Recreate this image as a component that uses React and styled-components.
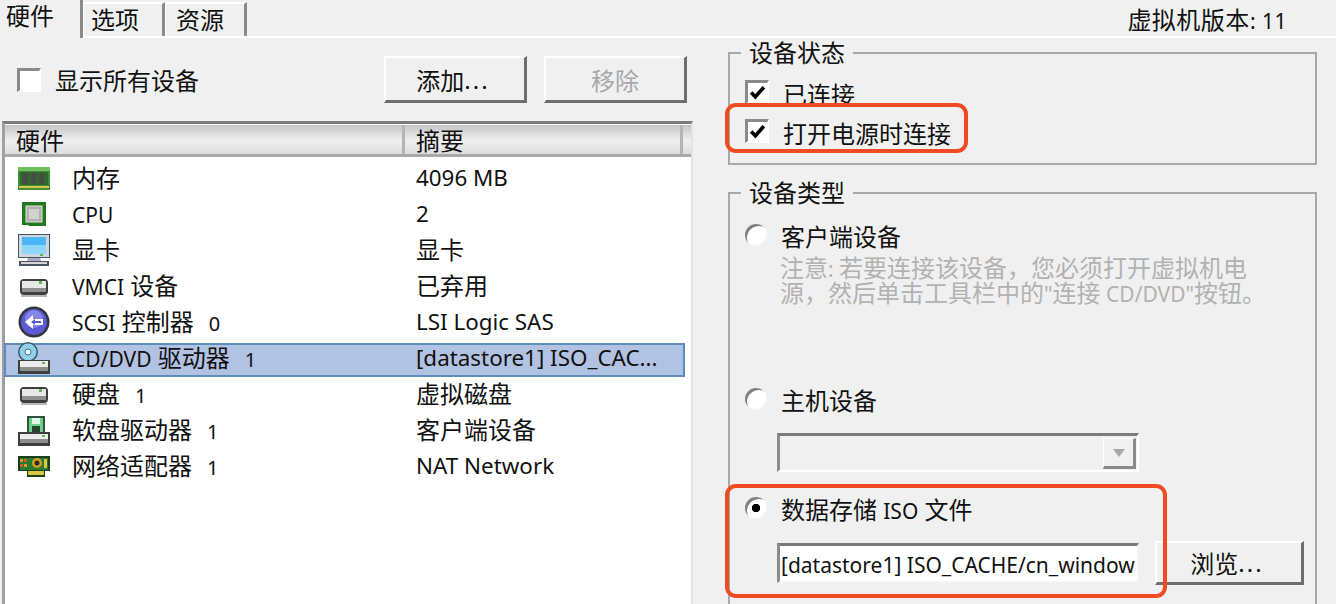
import styled, { createGlobalStyle } from "styled-components"

const GlobalStyle = createGlobalStyle`
    html, body {
        margin: 0;
        padding: 0;
        background: #f0f0f0;
    }
    *, *::before, *::after {
        box-sizing: border-box;
    }
`

const MemoryIcon = () => (
    <svg width="32" height="32" viewBox="0 0 32 32">
        <rect x="0" y="5" width="32" height="23" fill="#3f8f3a" />
        <rect x="0" y="5" width="32" height="4" fill="#6fbf5f" />
        <rect x="2" y="10" width="28" height="13" fill="#2f6a2c" />
        <rect x="5" y="11" width="5" height="11" fill="#4a4a4a" />
        <rect x="13" y="11" width="5" height="11" fill="#4a4a4a" />
        <rect x="21" y="11" width="5" height="11" fill="#4a4a4a" />
        <rect x="1" y="24" width="30" height="2" fill="#d8c84a" />
    </svg>
)

const CpuIcon = () => (
    <svg width="32" height="32" viewBox="0 0 32 32">
        <path d="M4 4h24v24h-17l-1-1h-6z" fill="#1f7a1f" />
        <rect x="8" y="8" width="16" height="16" fill="#b0b0ac" stroke="#e0e0dc" />
        <rect x="11" y="11" width="10" height="10" fill="#d2d2ce" />
    </svg>
)

const MonitorIcon = () => (
    <svg width="32" height="32" viewBox="0 0 32 32">
        <rect x="0" y="0" width="32" height="24" fill="#4a545e" />
        <rect x="1" y="1" width="30" height="22" fill="#cfd6dc" />
        <rect x="4" y="3" width="24" height="17" fill="#49b6f5" />
        <rect x="4" y="11" width="24" height="9" fill="#8ed6fb" />
        <path d="M10 24h12l1 3h-14z" fill="#a9a9c4" />
        <path d="M1 27h30v5h-30z" fill="#4a545e" />
        <rect x="3" y="28" width="26" height="2" fill="#d5d5d5" />
        <rect x="22" y="20" width="3" height="2" fill="#45c24a" />
    </svg>
)

const DiskIcon = () => (
    <svg width="32" height="32" viewBox="0 0 32 32">
        <rect x="2" y="9" width="28" height="16" rx="4" fill="#3e3e3e" />
        <rect x="4" y="11" width="24" height="7" fill="#e8e8e8" />
        <rect x="4" y="18" width="24" height="4" fill="#8f8f8f" />
        <rect x="21" y="11" width="3" height="3" fill="#58c24a" />
        <rect x="3" y="25" width="26" height="2" fill="#b8b8b8" />
    </svg>
)

const ScsiIcon = () => (
    <svg width="32" height="32" viewBox="0 0 32 32">
        <circle cx="16" cy="16" r="15.5" fill="#33333f" />
        <circle cx="16" cy="16" r="13" fill="#5a5ad2" />
        <circle cx="16" cy="13" r="9" fill="#8484e6" />
        <path d="M7 16l8-7v4h10v6h-10v4z" fill="#fff" />
        <path d="M13 16l4-3v2h6v2h-6v2z" fill="#5a5ad2" />
    </svg>
)

const CdDriveIcon = () => (
    <svg width="32" height="32" viewBox="0 0 32 32">
        <circle cx="10" cy="10" r="10" fill="#3f5866" />
        <circle cx="10" cy="10" r="8.5" fill="#8fd0ea" />
        <circle cx="10" cy="10" r="3" fill="#e8f6fb" stroke="#4a6f80" />
        <path d="M0 18h32v14h-32z" fill="#3e3e3e" />
        <rect x="2" y="19" width="28" height="6" fill="#ececec" />
        <rect x="2" y="25" width="28" height="4" fill="#8d8d8d" />
        <rect x="24" y="20" width="3" height="2" fill="#58c24a" />
    </svg>
)

const FloppyDriveIcon = () => (
    <svg width="32" height="32" viewBox="0 0 32 32">
        <rect x="9" y="2" width="18" height="18" fill="#35533a" />
        <rect x="11" y="4" width="14" height="15" fill="#69d28c" />
        <rect x="14" y="4" width="8" height="6" fill="#e2f5e6" />
        <rect x="14" y="12" width="8" height="7" fill="#28402c" />
        <path d="M0 18h32v14h-32z" fill="#3e3e3e" />
        <rect x="2" y="20" width="28" height="5" fill="#ececec" />
        <rect x="2" y="25" width="28" height="4" fill="#8d8d8d" />
        <rect x="24" y="21" width="3" height="2" fill="#58c24a" />
    </svg>
)

const NetworkIcon = () => (
    <svg width="32" height="32" viewBox="0 0 32 32">
        <path d="M0 6h32v15h-5v6h-18v-6h-9z" fill="#1a3f1e" />
        <rect x="2" y="8" width="28" height="12" fill="#2a7a2c" />
        <rect x="2" y="9" width="3" height="3" fill="#d89a2a" />
        <rect x="6" y="9" width="3" height="3" fill="#d8572a" />
        <rect x="2" y="14" width="3" height="3" fill="#d8572a" />
        <rect x="6" y="14" width="3" height="3" fill="#d89a2a" />
        <circle cx="19" cy="13" r="5" fill="#d8a020" />
        <circle cx="19" cy="13" r="2.5" fill="#2b2b2b" />
        <rect x="26" y="9" width="3" height="9" fill="#e0c04a" />
        <rect x="10" y="21" width="16" height="4" fill="#d9c53e" />
    </svg>
)

const devices = [
    { icon: <MemoryIcon />, name: "内存", summary: "4096 MB" },
    { icon: <CpuIcon />, latin: "CPU", summary: "2" },
    { icon: <MonitorIcon />, name: "显卡", summary: "显卡", cjk: true },
    { icon: <DiskIcon />, latin: "VMCI", name: " 设备", summary: "已弃用", cjk: true },
    { icon: <ScsiIcon />, latin: "SCSI", name: " 控制器", count: "0", summary: "LSI Logic SAS" },
    { icon: <CdDriveIcon />, latin: "CD/DVD", name: " 驱动器", count: "1", summary: "[datastore1] ISO_CAC...", selected: true },
    { icon: <DiskIcon />, name: "硬盘", count: "1", summary: "虚拟磁盘", cjk: true },
    { icon: <FloppyDriveIcon />, name: "软盘驱动器", count: "1", summary: "客户端设备", cjk: true },
    { icon: <NetworkIcon />, name: "网络适配器", count: "1", summary: "NAT Network" },
]

const Check = () => (
    <svg width="17" height="17" viewBox="0 0 16 16">
        <path d="M2 8l4 4 8-9" fill="none" stroke="#000" strokeWidth="3.4" />
    </svg>
)

const App = () => {
    return (
        <>
            <GlobalStyle />
            <SWindow>
                <STabBar>
                    <STab $active $pad="6px">硬件</STab>
                    <STab $pad="7px">选项</STab>
                    <STab $pad="10px">资源</STab>
                    <SVersion>虚拟机版本<SLatin>: 11</SLatin></SVersion>
                </STabBar>
                <SBody>
                    <SLeft>
                        <SToolbar>
                            <SShowAll>
                                <SCheckbox />
                                <span>显示所有设备</span>
                            </SShowAll>
                            <SButton>添加<SDots>...</SDots></SButton>
                            <SButton $disabled>移除</SButton>
                        </SToolbar>
                        <SList>
                            <SListHeader>
                                <SHeaderCell $w="400px">硬件</SHeaderCell>
                                <SHeaderCell $w="278px">摘要</SHeaderCell>
                            </SListHeader>
                            {devices.map((d) => (
                                <SRow key={(d.latin || "") + d.name + d.summary} $selected={d.selected}>
                                    <SIconSlot>{d.icon}</SIconSlot>
                                    <SName>
                                        {d.latin && <SLatin>{d.latin}</SLatin>}
                                        {d.name}
                                        {d.count && <SCount>{d.count}</SCount>}
                                    </SName>
                                    <SSummary $cjk={d.cjk}>{d.summary}</SSummary>
                                </SRow>
                            ))}
                        </SList>
                    </SLeft>
                    <SRight>
                        <SGroup $height="127px">
                            <SLegend>设备状态</SLegend>
                            <SCheckRow>
                                <SCheckbox><Check /></SCheckbox>
                                <span>已连接</span>
                            </SCheckRow>
                            <SHighlight $width="243px" $top="-10px" $bottom="-1px">
                                <SCheckRow>
                                    <SCheckbox><Check /></SCheckbox>
                                    <span>打开电源时连接</span>
                                </SCheckRow>
                            </SHighlight>
                        </SGroup>
                        <STypeGroup>
                            <SLegend>设备类型</SLegend>
                            <SRadioRow $top="12px">
                                <SRadio />
                                <span>客户端设备</span>
                            </SRadioRow>
                            <SNote>
                                注意<SLatin>: </SLatin>若要连接该设备，您必须打开虚拟机电<br />
                                源，然后单击工具栏中的<SLatin>"</SLatin>连接<SLatin> CD/DVD"</SLatin>按钮。
                            </SNote>
                            <SRadioRow $top="79px">
                                <SRadio />
                                <span>主机设备</span>
                            </SRadioRow>
                            <SSelect>
                                <SSelectArrow />
                            </SSelect>
                            <SHighlight $width="442px" $top="-9px" $bottom="-13px" $marginTop="21px">
                                <SRadioRow>
                                    <SRadio $checked />
                                    <span>数据存储 <SLatin>ISO</SLatin> 文件</span>
                                </SRadioRow>
                                <SFileRow>
                                    <SPathField>[datastore1] ISO_CACHE/cn_window</SPathField>
                                    <SBrowse>浏览<SDots>...</SDots></SBrowse>
                                </SFileRow>
                            </SHighlight>
                        </STypeGroup>
                    </SRight>
                </SBody>
            </SWindow>
        </>
    )
}

const SWindow = styled.div`
    width: 1336px;
    height: 604px;
    overflow: hidden;
    background: #f0f0f0;
    color: #111;
    font-family: "Noto Sans", "Noto Sans CJK SC", sans-serif;
    font-size: 24px;
`

const SLatin = styled.span`
    font-size: 21px;
    line-height: 1;
`

const SDots = styled.span`
    letter-spacing: 2px;
    margin-right: 4px;
`

const STabBar = styled.div`
    height: 38px;
    display: flex;
    align-items: flex-end;
    border-bottom: 2px solid #fff;
`

const STab = styled.div`
    width: ${(p) => (p.$active ? "83px" : "82px")};
    height: ${(p) => (p.$active ? "38px" : "34px")};
    margin-bottom: ${(p) => (p.$active ? "-2px" : "0")};
    padding-left: ${(p) => p.$pad};
    padding-bottom: ${(p) => (p.$active ? "9px" : "3px")};
    display: flex;
    align-items: center;
    background: #f0f0f0;
    border-right: 3px solid #8a8a8a;
    border-top: ${(p) => (p.$active ? "none" : "2px solid #fff")};
    border-left: ${(p) => (p.$active ? "none" : "1px solid #fff")};
`

const SVersion = styled.div`
    margin-left: auto;
    margin-right: 49px;
    align-self: center;
    letter-spacing: 0.5px;
`

const SBody = styled.div`
    display: grid;
    grid-template-columns: 728px 589px;
`

const SLeft = styled.div`
    padding: 18px 0 0 2px;
`

const SToolbar = styled.div`
    width: 685px;
    height: 47px;
    display: flex;
    align-items: center;
    gap: 17px;
`

const SShowAll = styled.div`
    display: flex;
    align-items: center;
    gap: 14px;
    padding-left: 15px;
    margin-right: auto;
`

const SCheckbox = styled.div`
    width: 24px;
    height: 24px;
    flex: none;
    display: flex;
    align-items: center;
    justify-content: center;
    background: #fff;
    border-style: solid;
    border-width: 3px 2px 2px 3px;
    border-color: #8a8a8a #fff #fff #8a8a8a;
`

const SButton = styled.div`
    width: 143px;
    height: 47px;
    display: flex;
    align-items: center;
    justify-content: center;
    background: #f0f0f0;
    border-style: solid;
    border-width: 2px 3px 3px 2px;
    border-color: #fff #6e6e6e #6e6e6e #fff;
    color: ${(p) => (p.$disabled ? "#a8a8a8" : "#111")};
`

const SList = styled.div`
    width: 691px;
    height: 600px;
    margin-top: 18px;
    background: #fff;
    border-top: 3px solid #7c7c7c;
    border-left: 3px solid #a0a0a0;
    border-right: 2px solid #e4e4e4;
`

const SListHeader = styled.div`
    height: 33px;
    display: flex;
    background: linear-gradient(#c4c4c4, #f0f0f0 55%, #dcdcdc);
    border-top: 1px solid #fff;
    border-bottom: 3px solid #a8a8a8;
    margin-bottom: 3px;
`

const SHeaderCell = styled.div`
    width: ${(p) => p.$w};
    height: 100%;
    display: flex;
    align-items: center;
    padding-left: 11px;
    border-right: 3px solid #b4b4b4;
`

const SRow = styled.div`
    height: 36px;
    width: 680px;
    position: relative;
    z-index: 0;
    display: grid;
    grid-template-columns: 67px 344px 1fr;
    grid-template-rows: 36px;
    align-items: center;
    &::before {
        content: "";
        display: ${(p) => (p.$selected ? "block" : "none")};
        position: absolute;
        z-index: -1;
        inset: 3px 0 -1px -1px;
        background: #b1c2e2;
        border: 2px solid #5b8dbd;
    }
`

const SIconSlot = styled.div`
    padding-left: 13px;
    height: 32px;
    svg {
        display: block;
    }
`

const SName = styled.span`
    display: block;
    line-height: 30px;
    white-space: pre;
`

const SCount = styled.span`
    margin-left: 15px;
    font-size: 20px;
    line-height: 1;
`

const SSummary = styled.span`
    display: block;
    font-size: ${(p) => (p.$cjk ? "24px" : "22.4px")};
    line-height: 30px;
    white-space: nowrap;
`

const SRight = styled.div`
    display: flex;
    flex-direction: column;
`

const SGroup = styled.fieldset`
    margin: 0;
    padding: 6px 0 0 15px;
    min-width: 0;
    height: ${(p) => p.$height};
    border: 2px solid #a8a8a8;
`

const STypeGroup = styled(SGroup)`
    margin-top: 13px;
    height: 600px;
    padding-top: 0;
`

const SLegend = styled.legend`
    margin-left: -4px;
    padding: 0 8px;
    height: 30px;
    line-height: 30px;
`

const SCheckRow = styled.div`
    height: 39px;
    display: flex;
    align-items: center;
    gap: 14px;
    ${SCheckbox} {
        margin-top: -4px;
    }
`

const SHighlight = styled.div`
    position: relative;
    margin-top: ${(p) => p.$marginTop || "0"};
    &::after {
        content: "";
        position: absolute;
        pointer-events: none;
        left: -20px;
        top: ${(p) => p.$top};
        bottom: ${(p) => p.$bottom};
        width: ${(p) => p.$width};
        border: 4px solid #ef4a22;
        border-radius: 11px;
    }
`

const SRadioRow = styled.div`
    height: 30px;
    margin-top: ${(p) => p.$top || "0"};
    display: flex;
    align-items: center;
    gap: 14px;
    > span {
        padding-top: 1px;
    }
`

const SRadio = styled.div`
    width: 22px;
    height: 22px;
    flex: none;
    border-radius: 50%;
    background: ${(p) =>
        p.$checked
            ? "radial-gradient(circle, #000 0 4px, #fff 4.5px)"
            : "#fff"};
    box-shadow: inset 3px 3px 0 -1px #808080, inset -2px -2px 0 -1px #f4f4f4;
`

const SNote = styled.div`
    margin: 5px 0 0 35px;
    line-height: 25px;
    color: #b2b2b2;
`

const SSelect = styled.div`
    width: 362px;
    height: 39px;
    margin: 19px 0 0 32px;
    display: flex;
    justify-content: flex-end;
    padding: 2px 1px 1px 0;
    background: #f0f0f0;
    border-style: solid;
    border-width: 3px 2px 2px 3px;
    border-color: #7c7c7c #fff #fff #8c8c8c;
`

const SSelectArrow = styled.div`
    width: 33px;
    display: flex;
    align-items: center;
    justify-content: center;
    border-style: solid;
    border-width: 1px 3px 3px 1px;
    border-color: #fff #8a8a8a #8a8a8a #fff;
    &::after {
        content: "";
        border-style: solid;
        border-width: 8px 6px 0 6px;
        border-color: #a8a8a8 transparent transparent transparent;
    }
`

const SFileRow = styled.div`
    margin: 18px 0 0 32px;
    display: flex;
    align-items: center;
    gap: 16px;
`

const SPathField = styled.div`
    width: 362px;
    height: 40px;
    padding-left: 1px;
    line-height: 38px;
    overflow: hidden;
    white-space: nowrap;
    background: #fff;
    border-style: solid;
    border-width: 3px 2px 2px 3px;
    border-color: #7c7c7c #f4f4f4 #f4f4f4 #8c8c8c;
    font-size: 21px;
`

const SBrowse = styled(SButton)`
    width: 149px;
    height: 44px;
`

export default App
